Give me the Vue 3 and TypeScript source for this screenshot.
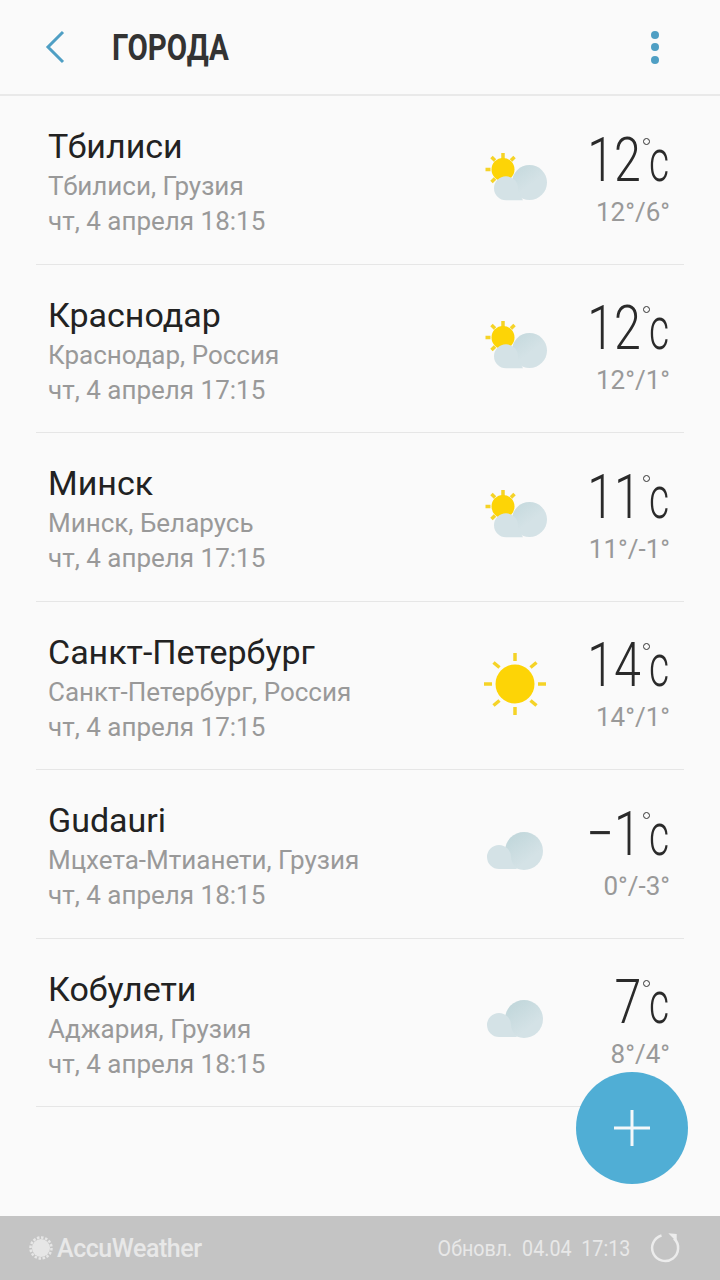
<template>
  <div class="screen">
    <header class="topbar">
      <button class="back" aria-label="Назад">
        <svg width="24" height="36" viewBox="0 0 24 36"><path d="M20 3 5 18l15 15" fill="none" stroke="#4f9fc4" stroke-width="3" /></svg>
      </button>
      <h1 class="title">ГОРОДА</h1>
      <div class="dots"><i></i><i></i><i></i></div>
    </header>

    <ul class="cities">
      <li v-for="(c, i) in cities" :key="c.name" class="city">
        <div class="info">
          <div class="name">{{ c.name }}</div>
          <div class="sub">{{ c.region }}</div>
          <div class="sub">{{ c.time }}</div>
        </div>
        <svg class="icon" width="66" height="70" viewBox="0 0 66 70">
          <defs>
            <linearGradient :id="'fold' + i" gradientUnits="userSpaceOnUse" x1="26" y1="20" x2="42" y2="42">
              <stop offset="0" stop-color="#c3d8dc" />
              <stop offset="1" stop-color="#d4e2e6" />
            </linearGradient>
          </defs>
          <g v-if="c.icon === 'partly'">
            <path d="M19 7v6M7.500 11l3.500 3.500M30.500 11 27 14.500M1.500 23.500h5M7.500 36l3.500-3.500" stroke="#f5d327" stroke-width="3.500" />
            <circle cx="19" cy="23.500" r="11.500" fill="#fdd406" />
            <circle cx="45.500" cy="36.500" r="17.500" :fill="'url(#fold' + i + ')'" />
            <path d="M22 54.300a12 12 0 1 1 12-12c0 3 2 6 5 12z" fill="#d4e2e6" />
          </g>
          <g v-else-if="c.icon === 'sun'">
            <path d="M31 2v8M31 56v8M0 33h8M54 33h8M9.500 11.500l6 5M52.500 11.500l-6 5M9.500 54.500l6-5M52.500 54.500l-6-5" stroke="#f5d327" stroke-width="3.500" />
            <circle cx="31" cy="33" r="19.500" fill="#fdd406" />
          </g>
          <g v-else>
            <circle cx="40" cy="31" r="19" :fill="'url(#fold' + i + ')'" />
            <path d="M15 49a12 12 0 1 1 12-12c0 4 2 8 6 12z" fill="#d4e2e6" />
          </g>
        </svg>
        <div class="temps">
          <div class="now">
            <span class="deg">{{ c.temp }}</span>
            <span class="unit"><span class="ring"></span><span class="c">c</span></span>
          </div>
          <div class="range">{{ c.range }}</div>
        </div>
      </li>
    </ul>

    <button class="fab" aria-label="Добавить">
      <svg width="38" height="38" viewBox="0 0 38 38"><path d="M19 1v36M1 19h36" stroke="#f4f8fa" stroke-width="3" /></svg>
    </button>

    <footer class="bottom">
      <div class="brand">
        <svg width="24" height="24" viewBox="0 0 24 24">
          <circle cx="12" cy="12" r="9" fill="#e6e6e6" />
          <circle cx="12" cy="12" r="10.500" fill="none" stroke="#e6e6e6" stroke-width="2.500" stroke-dasharray="2.500 1.600" />
        </svg>
        <span>AccuWeather</span>
      </div>
      <div class="updated">
        <span class="stamp">Обновл.&nbsp; 04.04&nbsp; 17:13</span>
        <svg width="32" height="32" viewBox="0 0 32 32">
          <path d="M12.500 3.500A13 13 0 1 0 25 6.500" fill="none" stroke="#ececec" stroke-width="2.500" />
          <path d="M19.300 1.300 27.700 2v7.700z" fill="#ececec" />
        </svg>
      </div>
    </footer>
  </div>
</template>

<script setup lang="ts">
interface City {
  name: string;
  region: string;
  time: string;
  icon: "partly" | "sun" | "cloud";
  temp: string;
  range: string;
}

const cities: City[] = [
  { name: "Тбилиси", region: "Тбилиси, Грузия", time: "чт, 4 апреля 18:15", icon: "partly", temp: "12", range: "12°/6°" },
  { name: "Краснодар", region: "Краснодар, Россия", time: "чт, 4 апреля 17:15", icon: "partly", temp: "12", range: "12°/1°" },
  { name: "Минск", region: "Минск, Беларусь", time: "чт, 4 апреля 17:15", icon: "partly", temp: "11", range: "11°/-1°" },
  { name: "Санкт-Петербург", region: "Санкт-Петербург, Россия", time: "чт, 4 апреля 17:15", icon: "sun", temp: "14", range: "14°/1°" },
  { name: "Gudauri", region: "Мцхета-Мтианети, Грузия", time: "чт, 4 апреля 18:15", icon: "cloud", temp: "−1", range: "0°/-3°" },
  { name: "Кобулети", region: "Аджария, Грузия", time: "чт, 4 апреля 18:15", icon: "cloud", temp: "7", range: "8°/4°" },
];
</script>

<style scoped>
.screen {
  position: relative;
  width: 720px;
  height: 1280px;
  display: flex;
  flex-direction: column;
  background: #fafafa;
  font-family: Roboto, "Noto Sans", sans-serif;
  overflow: hidden;
}

.topbar {
  height: 96px;
  box-sizing: border-box;
  flex: none;
  display: flex;
  align-items: center;
  padding: 0 61px 0 43px;
  border-bottom: 2px solid #e9e9e9;
}

.back {
  width: 69px;
  height: 36px;
  border: 0;
  padding: 0;
  background: none;
  text-align: left;
}

.title {
  flex: 1;
  margin: 2px 0 0;
  font-size: 36px;
  font-weight: 700;
  color: #333;
  transform: scaleX(0.82);
  transform-origin: left center;
}

.dots {
  display: flex;
  flex-direction: column;
  gap: 4.500px;
}

.dots i {
  width: 8px;
  height: 8px;
  border-radius: 50%;
  background: #4f9fc4;
}

.cities {
  list-style: none;
  margin: 0;
  padding: 0 36px;
  flex: 1;
}

.city {
  height: 168.500px;
  box-sizing: border-box;
  display: flex;
  align-items: center;
  padding: 0 16px 0 12px;
  border-bottom: 1px solid #e6e6e6;
}

.info {
  flex: 1;
  margin-top: 6px;
}

.name {
  font-size: 34px;
  line-height: 40px;
  color: #222;
  margin-bottom: 3px;
}

.sub {
  font-size: 26px;
  line-height: 35px;
  color: #999;
}

.icon {
  flex: none;
  margin-top: 2px;
}

.temps {
  width: 118px;
  margin-bottom: 5px;
  text-align: right;
}

.now {
  display: flex;
  justify-content: flex-end;
  align-items: baseline;
  height: 66px;
  margin-bottom: 3px;
  color: #2a2a2a;
}

.deg {
  font-size: 62px;
  line-height: 66px;
  font-weight: 300;
  margin-right: -1px;
  transform: scaleX(0.78);
  transform-origin: right center;
}

.unit {
  position: relative;
  width: 28px;
  text-align: left;
}

.ring {
  position: absolute;
  left: 3px;
  top: 10px;
  width: 5px;
  height: 5px;
  border: 1.500px solid #333;
  border-radius: 50%;
}

.c {
  display: inline-block;
  margin-left: 9px;
  font-size: 60px;
  line-height: 66px;
  font-weight: 300;
  transform: scaleX(0.65);
  transform-origin: left center;
}

.range {
  margin-right: -2px;
  font-size: 26px;
  line-height: 32px;
  color: #999;
}

.fab {
  position: absolute;
  left: 576px;
  top: 1072px;
  width: 112px;
  height: 112px;
  border: 0;
  padding: 0;
  border-radius: 50%;
  background: #50aed5;
  display: flex;
  align-items: center;
  justify-content: center;
}

.bottom {
  height: 64px;
  flex: none;
  display: flex;
  align-items: center;
  justify-content: space-between;
  padding: 0 39px 0 29px;
  background: #c4c4c4;
  color: #e8e8e8;
}

.brand {
  display: flex;
  align-items: center;
  gap: 4px;
  font-size: 25px;
  font-weight: 500;
  letter-spacing: -0.45px;
}

.updated {
  display: flex;
  align-items: center;
  gap: 19px;
}

.stamp {
  font-size: 22px;
  transform: scaleX(0.895);
  transform-origin: right center;
}
</style>
